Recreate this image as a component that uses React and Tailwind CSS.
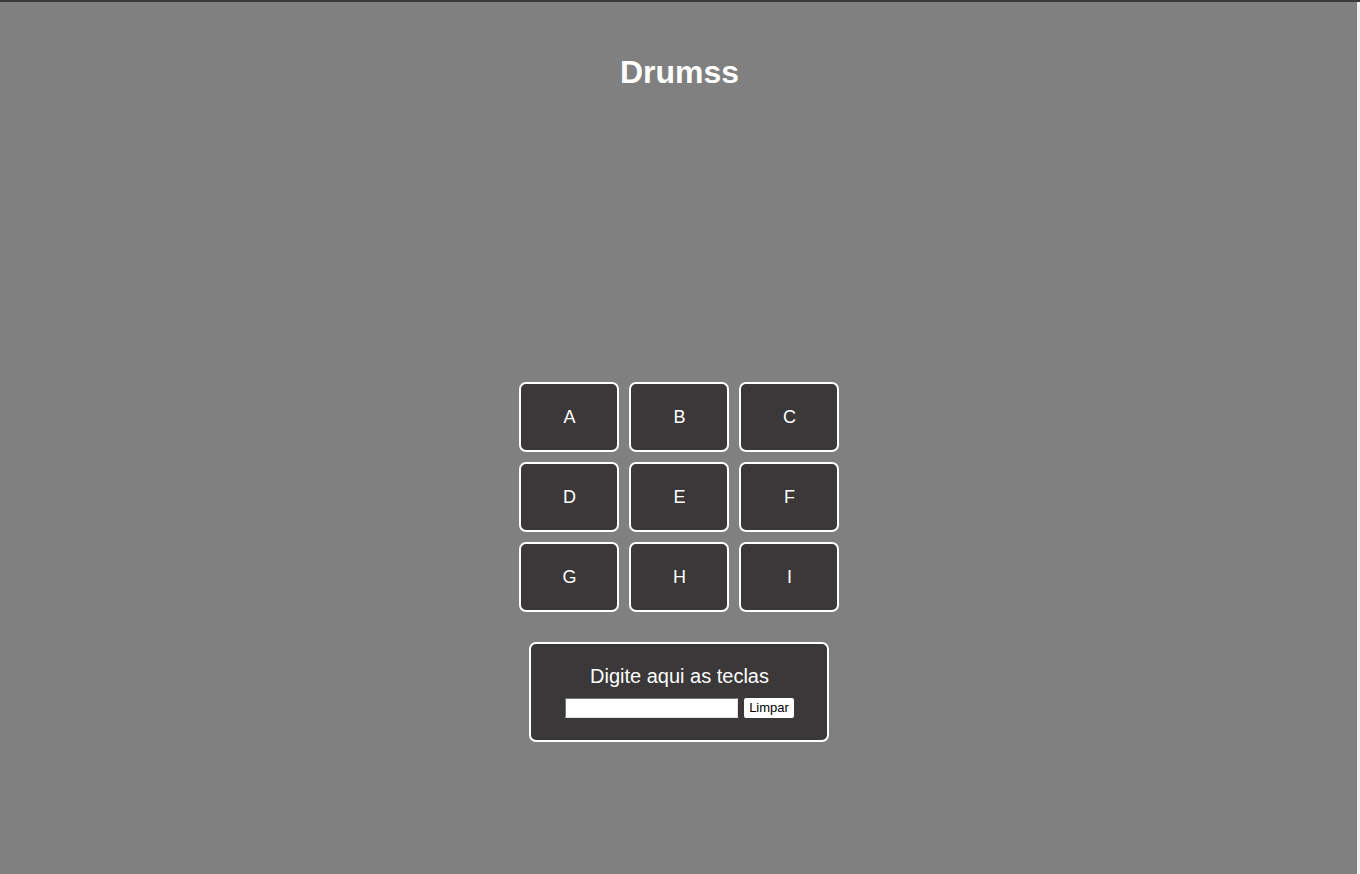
import React, { useState } from "react";

const keys = ["A", "B", "C", "D", "E", "F", "G", "H", "I"];

export default function App() {
  const [typed, setTyped] = useState("");

  return (
    <div
      className="flex h-[874px] w-full border-t-2 border-[#3b3b3d] bg-[#808080] text-white"
      style={{ fontFamily: '"Liberation Sans", Arial, sans-serif' }}
    >
      <div className="flex flex-1 flex-col items-center">
        <h1 className="mt-[52px] pl-[2px] text-[32px] font-bold leading-[37px]">Drumss</h1>

        {/* pads */}
        <div className="mt-[291px] grid grid-cols-3 gap-[10px]">
          {keys.map((k) => (
            <button
              key={k}
              className="flex h-[70px] w-[100px] items-center justify-center rounded-[7px] border-2 border-white bg-[#3a3839] pl-[2px] text-[18px] text-white"
            >
              {k}
            </button>
          ))}
        </div>

        {/* typing box */}
        <div className="mt-[30px] flex h-[100px] w-[300px] flex-col items-center rounded-[7px] border-2 border-white bg-[#3a3839] pt-[20px]">
          <span className="pl-[2px] text-[20px] leading-[24px]">Digite aqui as teclas</span>
          <div className="mt-[10px] flex items-center gap-[6px] pl-[2px]">
            <input
              value={typed}
              onChange={(e) => setTyped(e.target.value)}
              className="h-[20px] w-[173px] border border-t-[#767676] border-l-[#767676] border-r-[#e0e0e0] border-b-[#e0e0e0] bg-white px-1 text-[13px] text-black outline-none"
            />
            <button
              onClick={() => setTyped("")}
              className="h-[20px] w-[50px] rounded-[2px] bg-white text-[13px] leading-[20px] text-black"
            >
              Limpar
            </button>
          </div>
        </div>
      </div>
      <div className="w-[3px] bg-[#f1f1f1]" />
    </div>
  );
}
